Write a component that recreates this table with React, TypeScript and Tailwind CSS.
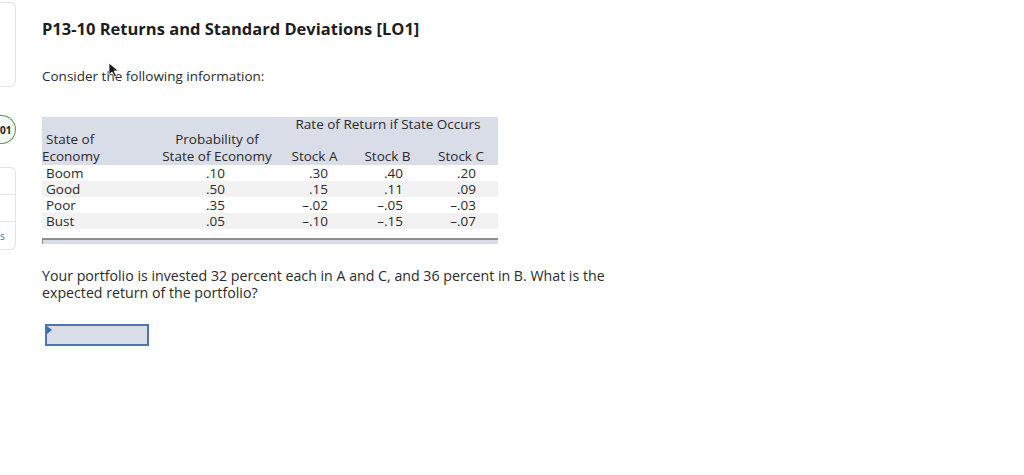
import React from "react";

const rows = [
  { state: "Boom", p: ".10", a: ".30", b: ".40", c: ".20" },
  { state: "Good", p: ".50", a: ".15", b: ".11", c: ".09" },
  { state: "Poor", p: ".35", a: "–.02", b: "–.05", c: "–.03" },
  { state: "Bust", p: ".05", a: "–.10", b: "–.15", c: "–.07" },
];

function Sidebar() {
  return (
    <div className="flex w-[16px] shrink-0 flex-col pt-[2px]">
      <div className="h-[85px] rounded-r-[6px] border border-l-0 border-[#e3e3e3] bg-white" />
      <div className="mt-[28px] flex h-[29px] items-center rounded-r-full border-[1.5px] border-l-0 border-[#5b9a4c] bg-[#f4f8f2] pr-[5px]">
        <span className="text-[10px] font-bold leading-none text-[#222]">01</span>
      </div>
      <div className="mt-[23px] flex h-[83px] flex-col rounded-r-[6px] border border-l-0 border-[#e3e3e3] bg-white">
        <div className="h-[27px] border-b border-[#e3e3e3]" />
        <div className="h-[27px] border-b border-[#e3e3e3]" />
        <div className="flex flex-1 items-center text-[10px] leading-none text-[#2f6fc0]">s</div>
      </div>
    </div>
  );
}

function Cursor() {
  return (
    <svg className="absolute left-[66px] top-[62px]" width="12" height="16" viewBox="0 0 12 16">
      <path d="M1 1 L1 13 L4 10 L6.5 15 L8.5 14 L6 9 L10.5 9 Z" fill="#1a1a1a" stroke="#fff" strokeWidth="0.8" />
    </svg>
  );
}

const cols = "grid grid-cols-[114px_122px_73px_73px_74px]";

export default function App() {
  return (
    <div
      className="flex min-h-[475px] w-[1024px] bg-white text-[#2a2a2a]"
      style={{ fontFamily: "'Open Sans', Lato, sans-serif" }}
    >
      <Sidebar />
      <div className="relative ml-[26px] flex flex-col pt-[18px]">
        <h1 className="text-[16.5px] font-bold leading-[22px] text-[#1d1d1d]">
          P13-10 Returns and Standard Deviations [LO1]
        </h1>
        <p className="mt-[27px] text-[13.5px] leading-[18px]">Consider the following information:</p>

        <div className="mt-[32px] w-[456px] text-[13.5px] leading-[16px]">
          <div className={`${cols} bg-[#d9dde8]`}>
            <div className="col-span-2" />
            <div className="col-span-3 text-center leading-[14px]">Rate of Return if State Occurs</div>
            <div className="pl-[4px] leading-[17px]">State of</div>
            <div className="text-center leading-[17px]">Probability of</div>
            <div className="col-span-3" />
            <div className="leading-[17px]">Economy</div>
            <div className="text-center leading-[17px]">State of Economy</div>
            <div className="text-center leading-[17px]">Stock A</div>
            <div className="text-center leading-[17px]">Stock B</div>
            <div className="text-center leading-[17px]">Stock C</div>
          </div>
          {rows.map((r, i) => (
            <div key={r.state} className={`${cols} ${i % 2 ? "bg-[#f2f2f2]" : "bg-white"}`}>
              <div className="pl-[4px]">{r.state}</div>
              <div className="pr-[53px] text-right">{r.p}</div>
              <div className="pr-[23px] text-right">{r.a}</div>
              <div className="pr-[21px] text-right">{r.b}</div>
              <div className="pr-[22px] text-right">{r.c}</div>
            </div>
          ))}
          <div className="mt-[9px] h-[6px] border-t-2 border-l border-[#8e8e8e] bg-[#d9dde8]" />
        </div>

        <p className="mt-[23px] w-[600px] text-[14.2px] leading-[17px]">
          Your portfolio is invested 32 percent each in A and C, and 36 percent in B. What is the
          <br />
          expected return of the portfolio?
        </p>

        <div className="relative ml-[3px] mt-[23px] h-[22px] w-[104px] border-2 border-[#4a76b3] bg-[#d9dde8]">
          <div className="absolute left-0 top-0 h-0 w-0 border-y-[4px] border-l-[5px] border-y-transparent border-l-[#2f6fc0]" />
        </div>
        <Cursor />
      </div>
    </div>
  );
}
